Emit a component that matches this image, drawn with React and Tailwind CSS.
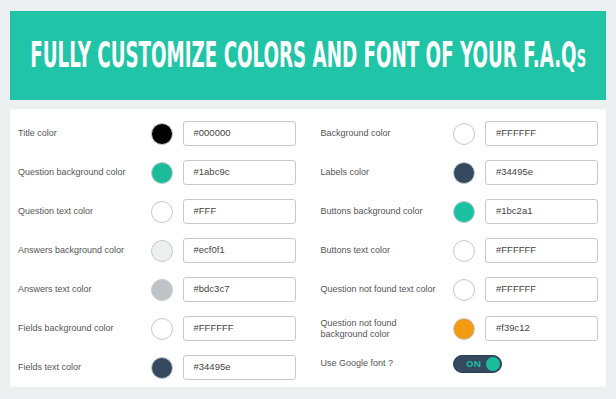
const leftRows = [
  { label: 'Title color', swatch: '#000000', value: '#000000' },
  { label: 'Question background color', swatch: '#1abc9c', value: '#1abc9c' },
  { label: 'Question text color', swatch: '#ffffff', value: '#FFF' },
  { label: 'Answers background color', swatch: '#ecf0f1', value: '#ecf0f1' },
  { label: 'Answers text color', swatch: '#bdc3c7', value: '#bdc3c7' },
  { label: 'Fields background color', swatch: '#ffffff', value: '#FFFFFF' },
  { label: 'Fields text color', swatch: '#34495e', value: '#34495e' },
];

const rightRows = [
  { label: 'Background color', swatch: '#ffffff', value: '#FFFFFF' },
  { label: 'Labels color', swatch: '#34495e', value: '#34495e' },
  { label: 'Buttons background color', swatch: '#1bc2a1', value: '#1bc2a1' },
  { label: 'Buttons text color', swatch: '#ffffff', value: '#FFFFFF' },
  { label: 'Question not found text color', swatch: '#ffffff', value: '#FFFFFF' },
  { label: 'Question not found background color', swatch: '#f39c12', value: '#f39c12', wrap: true },
];

function ColorRow({ row }) {
  return (
    <div className="flex items-center h-[25px]">
      <div className="flex-1">
        <div className={`text-[9px] leading-[11px] text-[#555] ${row.wrap ? 'max-w-[90px]' : ''}`}>{row.label}</div>
      </div>
      <div className="w-[22px] h-[22px] rounded-full border border-[#c5cacd]" style={{ backgroundColor: row.swatch }}></div>
      <div className="ml-[10px] w-[113px] h-[25px] border border-[#c5c9cc] rounded-[3px] pl-[10px] flex items-center text-[9.5px] text-[#444]">
        {row.value}
      </div>
    </div>
  );
}

export default function App() {
  return (
    <div className="w-[616px] h-[399px] bg-[#ecf0f1] pt-[11px] px-[10px] overflow-hidden" style={{ fontFamily: '"Liberation Sans", Arial, sans-serif' }}>
      <div className="h-[89px] bg-[#1fc5a6] flex items-center justify-center overflow-hidden">
        <div className="whitespace-nowrap text-white font-bold text-[35px] leading-none scale-x-[0.58]"
          style={{ fontFamily: '"DejaVu Sans Condensed", "DejaVu Sans", sans-serif', fontStretch: 'condensed' }}>
          FULLY CUSTOMIZE COLORS AND FONT OF YOUR F.A.Q<span className="text-[25px]">S</span>
        </div>
      </div>

      <div className="mt-[9px] h-[278px] bg-white pt-[12px] px-[8px] grid grid-cols-2 gap-x-[25px]">
        <div className="flex flex-col gap-[14px]">
          {leftRows.map((r) => <ColorRow key={r.label} row={r} />)}
        </div>
        <div className="flex flex-col gap-[14px]">
          {rightRows.map((r) => <ColorRow key={r.label} row={r} />)}
          <div className="flex h-[25px]">
            <div className="flex-1 text-[9px] leading-[11px] text-[#555] pt-[3px]">Use Google font ?</div>
            <div className="w-[145px]">
              <div className="w-[49px] h-[18px] rounded-full bg-[#34495e] border border-[#2c3e50] flex items-center justify-between pl-[12px] pr-[1px]">
                <span className="text-[9.5px] font-bold text-[#1abc9c]" style={{ fontFamily: '"Open Sans", sans-serif' }}>ON</span>
                <span className="w-[14px] h-[14px] rounded-full bg-[#1abc9c]"></span>
              </div>
            </div>
          </div>
        </div>
      </div>
    </div>
  );
}
